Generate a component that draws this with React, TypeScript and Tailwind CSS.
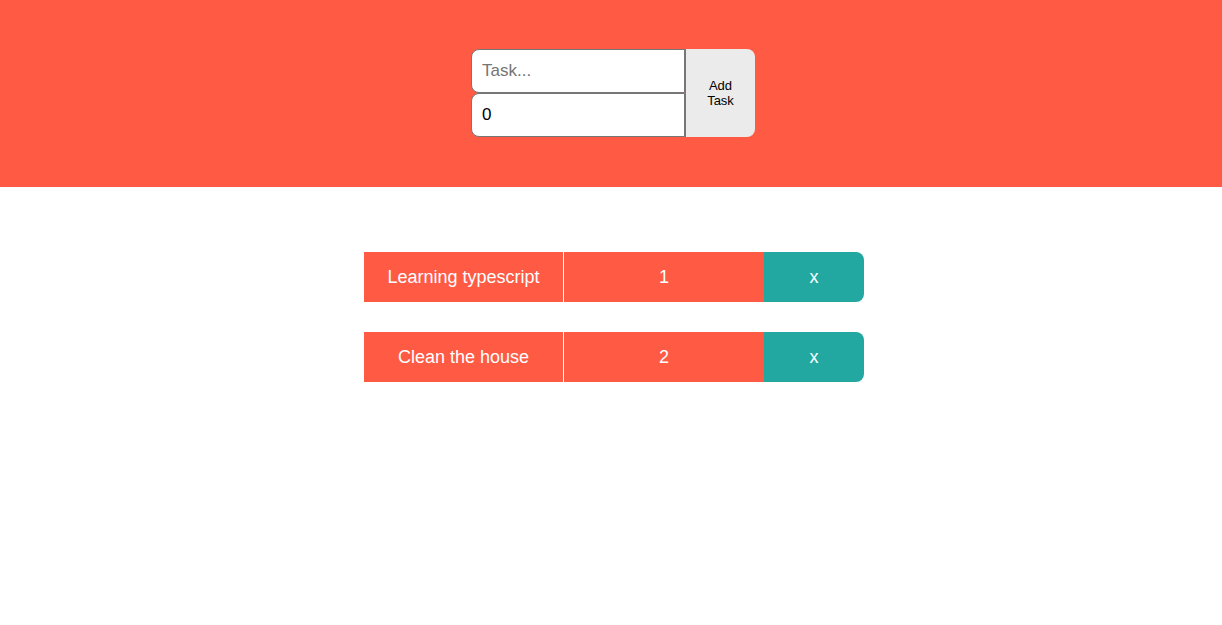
const tasks = [
  { name: "Learning typescript", deadline: 1 },
  { name: "Clean the house", deadline: 2 },
];

export default function App() {
  return (
    <div className="min-h-screen bg-white font-['Liberation_Sans',Arial,sans-serif]">
      <header className="h-[187px] bg-[#ff5a44] flex items-start justify-center pt-[49px]">
        <div className="flex ml-[4px]">
          <div className="flex flex-col w-[214px]">
            <input
              type="text"
              placeholder="Task..."
              className="h-[44px] px-[10px] text-[17px] bg-white border border-[#767676] rounded-tl-[8px] rounded-bl-[8px] rounded-tr-none rounded-br-none placeholder:text-[#757575] text-black outline-none"
            />
            <input
              type="number"
              defaultValue={0}
              className="h-[44px] px-[10px] text-[17px] bg-white border border-[#767676] rounded-tl-[8px] rounded-bl-[8px] text-black outline-none [appearance:textfield]"
            />
          </div>
          <button className="w-[70px] h-[88px] bg-[#ebebeb] text-black text-[13px] leading-[15px] border-l border-[#767676] rounded-r-[8px] px-[18px]">
            Add Task
          </button>
        </div>
      </header>

      <main className="flex flex-col items-center pt-[65px] gap-[30px]">
        {tasks.map((t) => (
          <div key={t.name} className="flex w-[500px] h-[50px] text-white text-[18px] ml-[6px]">
            <div className="w-[200px] bg-[#ff5a44] border-r border-white flex items-center justify-center">
              {t.name}
            </div>
            <div className="w-[200px] bg-[#ff5a44] flex items-center justify-center">
              {t.deadline}
            </div>
            <button className="w-[100px] bg-[#22a8a0] rounded-r-[8px] flex items-center justify-center text-white">
              x
            </button>
          </div>
        ))}
      </main>
    </div>
  );
}
